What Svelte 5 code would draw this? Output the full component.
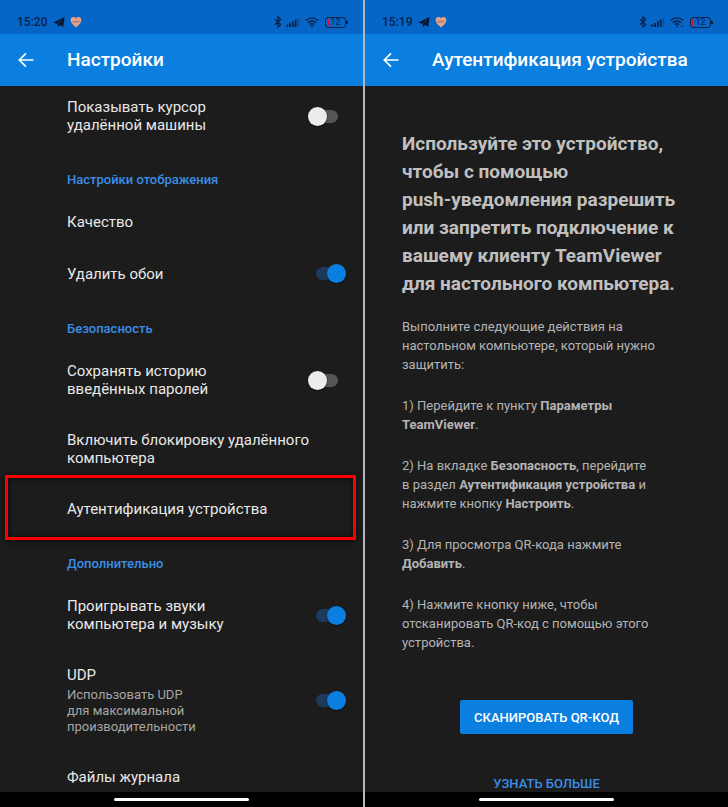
<script>
  const groups = $state([
    {
      id: 'input',
      title: '',
      items: [{ id: 'cursor', label: 'Показывать курсор\nудалённой машины', toggle: true, on: false }]
    },
    {
      id: 'display',
      title: 'Настройки отображения',
      items: [
        { id: 'quality', label: 'Качество' },
        { id: 'wallpaper', label: 'Удалить обои', toggle: true, on: true }
      ]
    },
    {
      id: 'security',
      title: 'Безопасность',
      items: [
        { id: 'history', label: 'Сохранять историю\nвведённых паролей', toggle: true, on: false },
        { id: 'lock', label: 'Включить блокировку удалённого\nкомпьютера' },
        { id: 'auth', label: 'Аутентификация устройства', highlighted: true }
      ]
    },
    {
      id: 'extra',
      title: 'Дополнительно',
      items: [
        { id: 'sound', label: 'Проигрывать звуки\nкомпьютера и музыку', toggle: true, on: true },
        {
          id: 'udp',
          label: 'UDP',
          hint: 'Использовать UDP\nдля максимальной\nпроизводительности',
          toggle: true,
          on: true
        },
        { id: 'logs', label: 'Файлы журнала' }
      ]
    }
  ]);
</script>

{#snippet statusBar(time, wifiActive)}
  <div class="status-bar">
    <span class="time">{time}</span>
    <svg class="telegram" width="12" height="12" viewBox="0 0 12 12" aria-hidden="true">
      <path d="M0.3 6.4 11.6 1 10.2 10.8 7 9 5.2 10.9 4.5 7.9Z" fill="currentColor" />
      <path d="M4.6 7.8 9 3.8" stroke="#0566c8" stroke-width="0.6" />
    </svg>
    <svg width="12" height="12" viewBox="0 0 12 12" aria-hidden="true">
      <path d="M6 11.4C3.4 9.3 0.6 7 0.6 4.1 0.6 0.8 4.5 0 6 2.4 7.5 0 11.4 0.8 11.4 4.1 11.4 7 8.6 9.3 6 11.4Z" fill="#e9a184" />
      <path d="M2.6 6H4.3L5.4 4.8 6.6 6.6 7.7 5.3H9.4" fill="none" stroke="#7c6678" stroke-width="0.9" />
    </svg>
    <span class="spacer"></span>
    <svg width="8" height="12" viewBox="0 0 8 12" aria-hidden="true">
      <path d="M1 3.3 6.6 8.6 4 11.2V0.8L6.6 3.4 1 8.7" fill="none" stroke="currentColor" stroke-width="1.2" />
    </svg>
    <svg class="signal" width="14" height="12" viewBox="0 0 14 12" aria-hidden="true">
      <path d="M1.3 8.5V11M4.1 7V11M6.9 5.2V11M9.7 3.5V11" stroke="currentColor" stroke-width="1.8" />
      <path d="M12.5 1.5V11" stroke="currentColor" stroke-width="1.4" opacity="0.35" />
    </svg>
    <svg class="wifi" width="14" height="12" viewBox="0 0 14 12" aria-hidden="true">
      <path d="M0.8 4.4C4.3 1 9.7 1 13.2 4.4M2.8 6.7C5.2 4.4 8.8 4.4 11.2 6.7M4.8 8.8C6.1 7.6 7.9 7.6 9.2 8.8" fill="none" stroke="currentColor" stroke-width="1.4" />
      <path d="M5.8 10 7 11.5 8.2 10C7.5 9.4 6.5 9.4 5.8 10Z" fill="currentColor" />
      {#if wifiActive}<path d="M10.6 9.2H13.4L12 11.4Z" fill="currentColor" opacity="0.6" />{/if}
    </svg>
    <span class="battery">12</span>
  </div>
{/snippet}

{#snippet backButton()}
  <button class="back" type="button" aria-label="Назад">
    <svg width="16" height="16" viewBox="0 0 16 16" aria-hidden="true">
      <path d="M15.5 8H1.8M8 1.3 1.3 8 8 14.7" fill="none" stroke="currentColor" stroke-width="1.7" />
    </svg>
  </button>
{/snippet}

<main>
  <section class="phone">
    {@render statusBar('15:20', false)}
    <header class="app-bar">
      {@render backButton()}
      <h1>Настройки</h1>
    </header>
    <div class="viewport">
      <div class="settings">
        {#each groups as group (group.id)}
          <section class="group">
            {#if group.title}<h2>{group.title}</h2>{/if}
            {#each group.items as item (item.id)}
              {#if item.toggle}
                <label class="row">
                  <span class="text">
                    <span class="label">{item.label}</span>
                    {#if item.hint}<span class="hint">{item.hint}</span>{/if}
                  </span>
                  <input class="switch" type="checkbox" role="switch" bind:checked={item.on} />
                </label>
              {:else}
                <button class="row" class:highlighted={item.highlighted} type="button">
                  <span class="label">{item.label}</span>
                </button>
              {/if}
            {/each}
          </section>
        {/each}
      </div>
    </div>
    <div class="nav-bar"><span class="pill"></span></div>
  </section>

  <section class="phone">
    {@render statusBar('15:19', true)}
    <header class="app-bar">
      {@render backButton()}
      <h1>Аутентификация устройства</h1>
    </header>
    <div class="viewport">
      <article class="auth">
        <h2 class="lead">
          Используйте это устройство, чтобы с помощью <span class="nowrap">push-уведомления</span> разрешить
          или запретить подключение к вашему клиенту TeamViewer для настольного компьютера.
        </h2>
        <p>Выполните следующие действия на настольном компьютере, который нужно защитить:</p>
        <p>1) Перейдите к пункту <b>Параметры TeamViewer</b>.</p>
        <p>
          2) На вкладке <b>Безопасность</b>, перейдите в&nbsp;раздел <b>Аутентификация устройства</b> и
          нажмите кнопку <b>Настроить</b>.
        </p>
        <p>3) Для просмотра QR-кода нажмите<br /><b>Добавить</b>.</p>
        <p>4) Нажмите кнопку ниже, чтобы отсканировать QR-код с помощью этого устройства.</p>
        <div class="actions">
          <button class="scan" type="button">СКАНИРОВАТЬ QR-КОД</button>
          <a class="more" href="#more">УЗНАТЬ БОЛЬШЕ</a>
        </div>
      </article>
    </div>
    <div class="nav-bar"><span class="pill"></span></div>
  </section>
</main>

<style>
  :global(body) {
    margin: 0;
    background: #1c1c1c;
  }

  main {
    display: grid;
    grid-template-columns: 1fr 1fr;
    gap: 2px;
    height: 100vh;
    background: #b4b6ba;
    font-family: Roboto, 'Noto Sans', sans-serif;
    color: #e8e8e8;
  }

  button {
    border: 0;
    font: inherit;
    color: inherit;
    cursor: pointer;
  }

  .phone {
    display: flex;
    flex-direction: column;
    min-width: 0;
    min-height: 0;
    background: #1c1c1c;
  }

  .status-bar {
    display: flex;
    align-items: center;
    box-sizing: border-box;
    height: 34px;
    padding: 10px 14px 0 17px;
    background: #0566c8;
    color: #0a2248;
  }

  .time {
    font-size: 12px;
    font-weight: 500;
    line-height: 14px;
  }

  .telegram {
    margin: 0 5px 0 6px;
    color: #07152c;
  }

  .spacer {
    flex: 1;
  }

  .signal {
    margin-left: 4px;
  }

  .wifi {
    margin: 0 6px 0 5px;
  }

  .battery {
    position: relative;
    box-sizing: border-box;
    width: 21px;
    height: 11px;
    margin-right: 3px;
    border: 1px solid #0a2248;
    border-radius: 3px;
    background: linear-gradient(#d3173b, #d3173b) 1px 1px / 2px 7px no-repeat;
    font-size: 9px;
    line-height: 9px;
    text-align: center;
  }

  .battery::after {
    content: '';
    position: absolute;
    top: 3px;
    right: -3px;
    width: 2px;
    height: 3px;
    background: #0a2248;
  }

  .app-bar {
    display: flex;
    align-items: center;
    box-sizing: border-box;
    height: 52px;
    padding-left: 18px;
    background: #0b7fe0;
    color: #fff;
  }

  .back {
    display: flex;
    margin-right: 33px;
    padding: 0;
    background: none;
  }

  h1 {
    margin: 0;
    font-size: 19px;
    font-weight: 500;
    line-height: 24px;
    white-space: nowrap;
  }

  .viewport {
    flex: 1;
    min-height: 0;
    overflow: hidden;
  }

  /* the list is scrolled slightly under the app bar */
  .settings {
    margin-top: -5px;
  }

  .group + .group {
    border-top: 1px solid #181818;
  }

  .group h2 {
    margin: 0;
    padding: 21px 17px 8px 67px;
    font-size: 13px;
    font-weight: 500;
    line-height: 16px;
    color: #3a8ee6;
  }

  .row {
    position: relative;
    display: flex;
    align-items: center;
    justify-content: space-between;
    box-sizing: border-box;
    width: 100%;
    padding: 17px 17px 16px 67px;
    background: none;
    text-align: left;
    cursor: pointer;
  }

  .text {
    display: flex;
    flex-direction: column;
    gap: 3px;
  }

  .label {
    font-size: 15px;
    line-height: 18px;
    white-space: pre-line;
  }

  .hint {
    font-size: 13px;
    line-height: 16px;
    white-space: pre-line;
    color: #a6a6a6;
  }

  .highlighted::after {
    content: '';
    position: absolute;
    inset: -8px 7px -6px 5px;
    border: 3px solid #f00;
    box-shadow: 0 1px 6px #000a, inset 0 1px 6px #000a;
    pointer-events: none;
  }

  .switch {
    appearance: none;
    position: relative;
    flex-shrink: 0;
    width: 38px;
    height: 19px;
    margin: 0;
    cursor: pointer;
  }

  .switch::before {
    content: '';
    position: absolute;
    inset: 3px 8px;
    border-radius: 7px;
    background: #555;
  }

  .switch::after {
    content: '';
    position: absolute;
    top: 0;
    left: 0;
    width: 19px;
    height: 19px;
    border-radius: 50%;
    background: #ececec;
    box-shadow: 0 1px 2px #0008;
  }

  .switch:checked::before {
    background: #1d3a5c;
  }

  .switch:checked::after {
    left: 19px;
    background: #0b7fe0;
  }

  .auth {
    padding: 44px 37px 0;
    font-size: 13px;
    line-height: 19px;
    color: #b4b4b4;
  }

  .lead {
    margin: 0 0 19px;
    font-size: 19px;
    font-weight: 700;
    line-height: 28px;
    color: #c0c0c0;
  }

  .nowrap {
    white-space: nowrap;
  }

  p {
    margin: 0 0 22px;
  }

  .actions {
    display: flex;
    flex-direction: column;
    align-items: center;
    gap: 40px;
    padding-top: 26px;
  }

  .scan {
    height: 34px;
    padding: 0 14px;
    border-radius: 2px;
    background: #0b7fe0;
    color: #fff;
    font-size: 13px;
    font-weight: 500;
  }

  .more {
    font-size: 13px;
    font-weight: 500;
    line-height: 20px;
    color: #3a8ee6;
    text-decoration: none;
  }

  .nav-bar {
    position: relative;
    z-index: 1;
    display: flex;
    justify-content: center;
    align-items: center;
    height: 15px;
    background: #000;
  }

  .pill {
    width: 37%;
    height: 3px;
    border-radius: 2px;
    background: #fff;
  }
</style>
